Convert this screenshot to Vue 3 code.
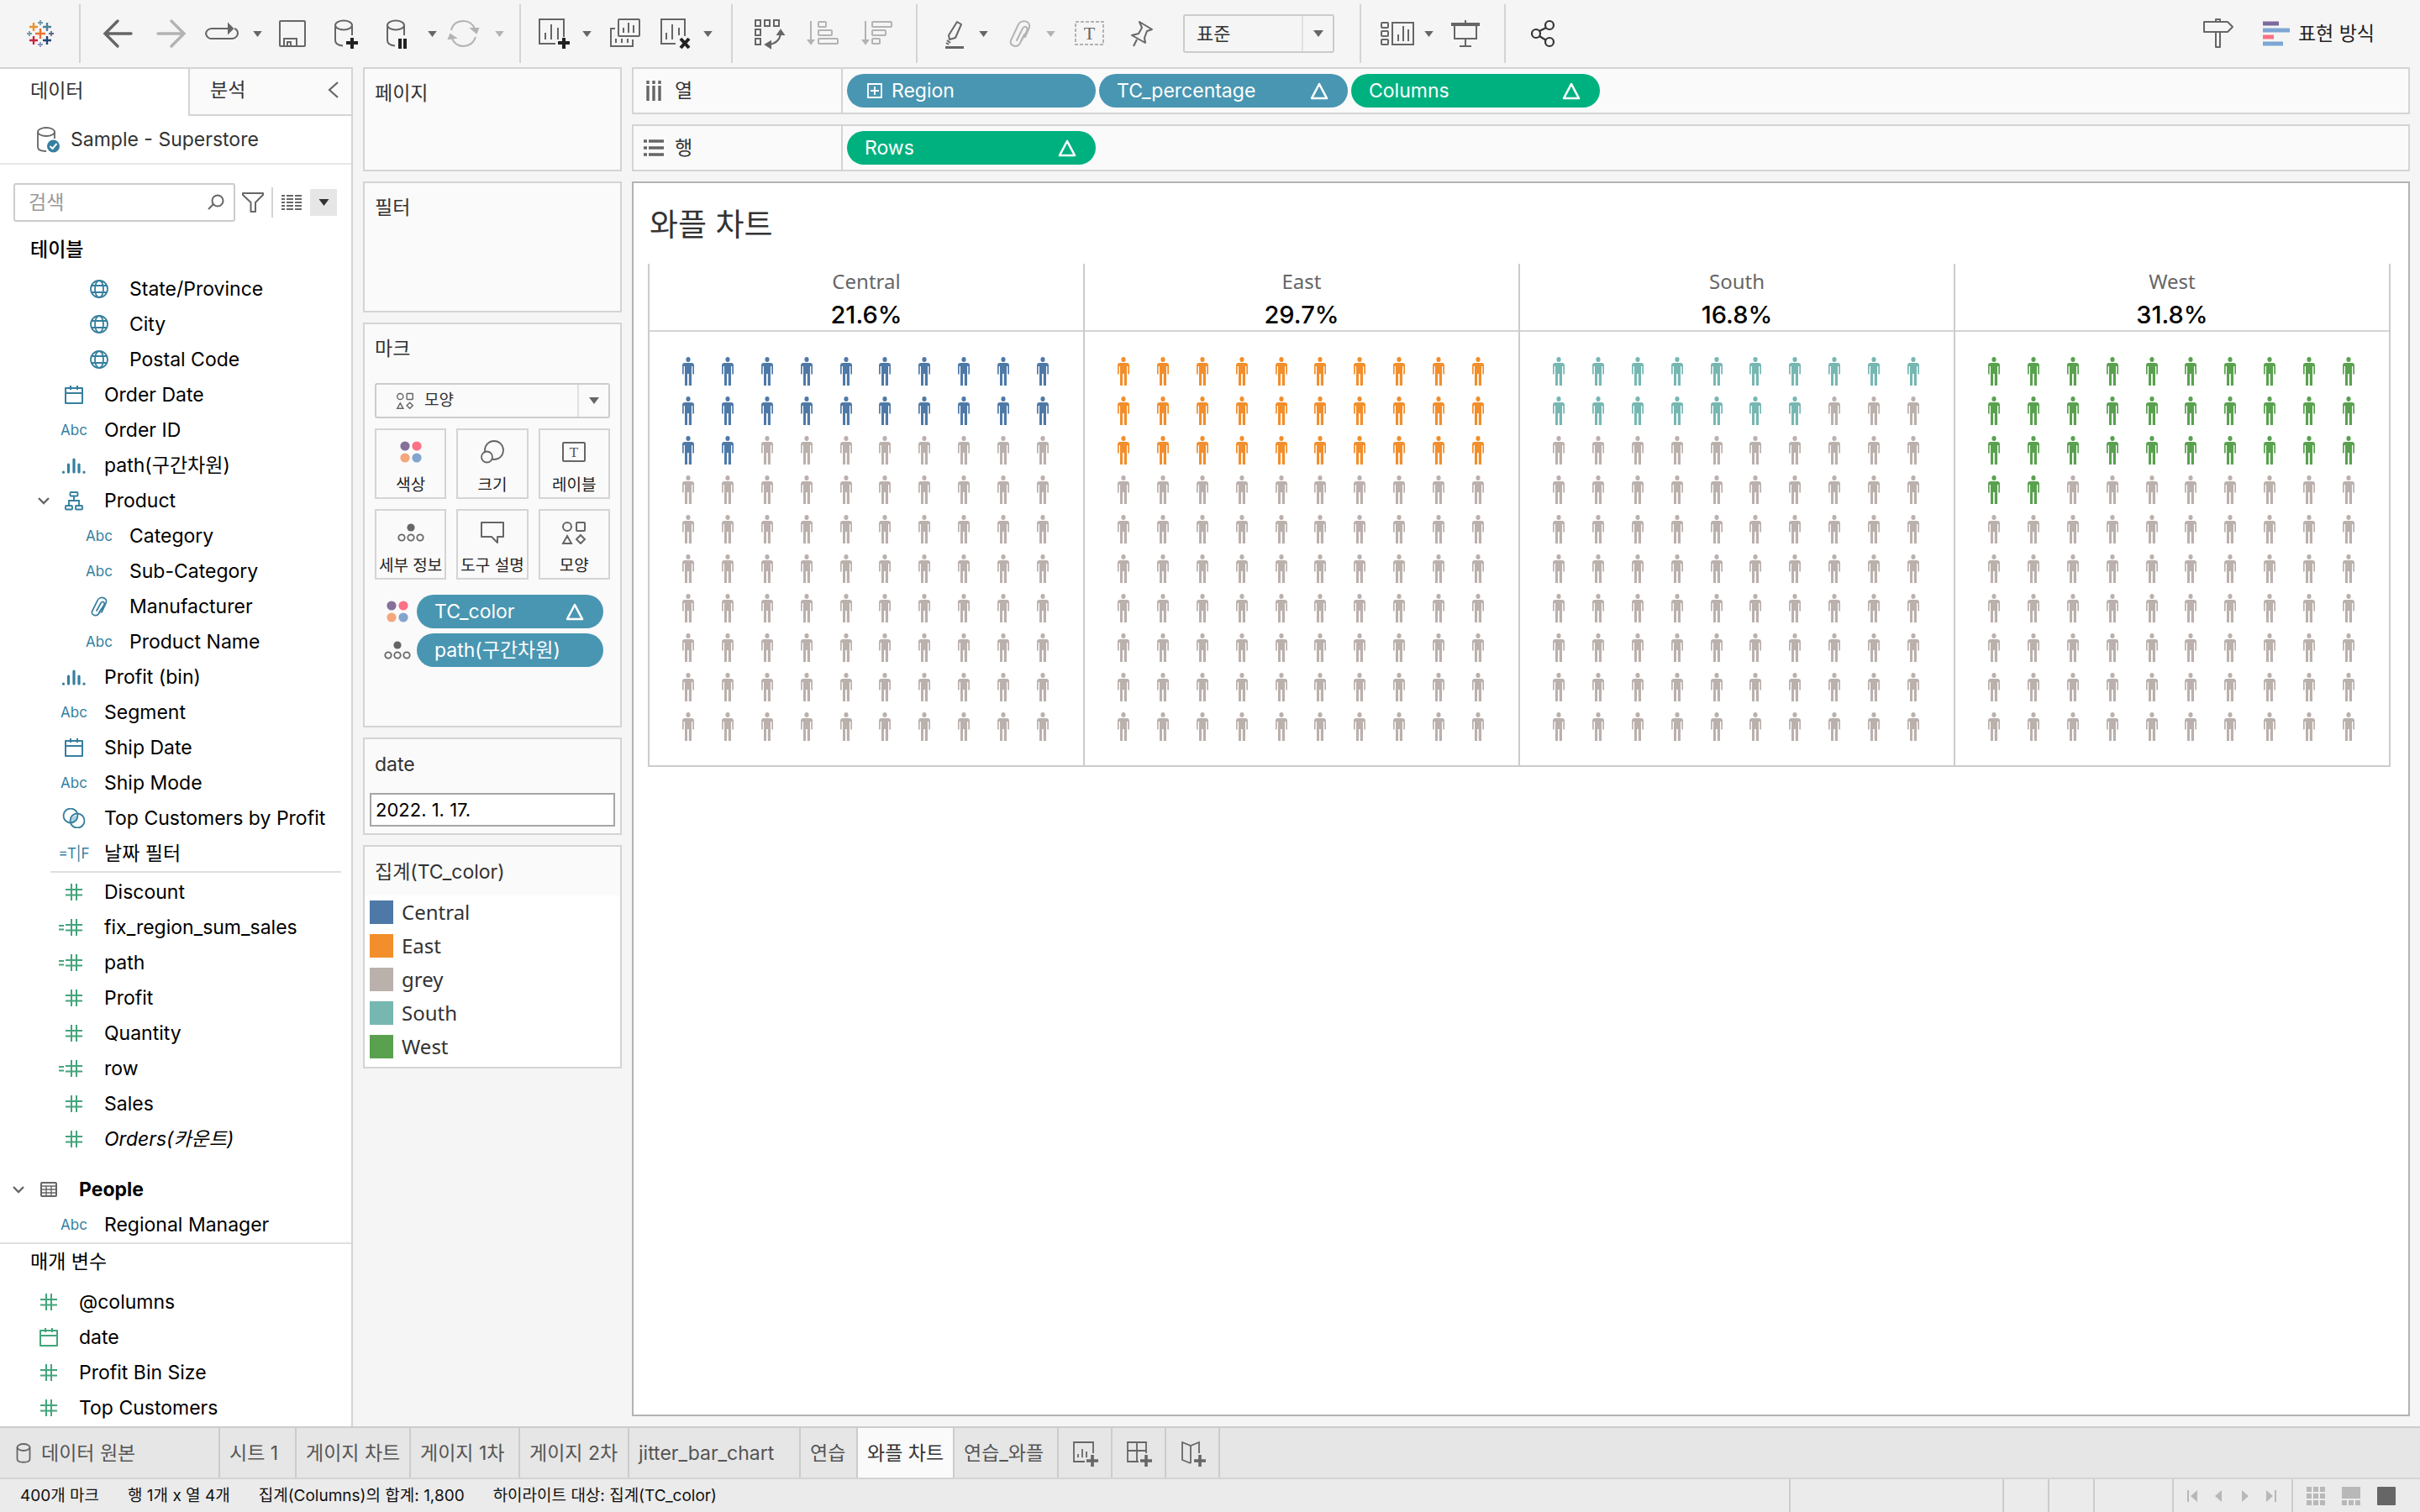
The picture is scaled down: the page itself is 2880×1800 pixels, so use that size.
<script setup>
import { ref } from 'vue'

const dimensions = [
  { name: 'State/Province', icon: 'globe', level: 2 },
  { name: 'City', icon: 'globe', level: 2 },
  { name: 'Postal Code', icon: 'globe', level: 2 },
  { name: 'Order Date', icon: 'calendar', level: 1 },
  { name: 'Order ID', text: 'Abc', level: 1 },
  { name: 'path(구간차원)', icon: 'bin', level: 1 },
  { name: 'Product', icon: 'hierarchy', level: 1, open: true },
  { name: 'Category', text: 'Abc', level: 2 },
  { name: 'Sub-Category', text: 'Abc', level: 2 },
  { name: 'Manufacturer', icon: 'clip-small', level: 2 },
  { name: 'Product Name', text: 'Abc', level: 2 },
  { name: 'Profit (bin)', icon: 'bin', level: 1 },
  { name: 'Segment', text: 'Abc', level: 1 },
  { name: 'Ship Date', icon: 'calendar', level: 1 },
  { name: 'Ship Mode', text: 'Abc', level: 1 },
  { name: 'Top Customers by Profit', icon: 'set', level: 1 },
  { name: '날짜 필터', text: '=T|F', level: 1 },
]
const measures = [
  { name: 'Discount', icon: 'hash', level: 1 },
  { name: 'fix_region_sum_sales', icon: 'calc-hash', level: 1 },
  { name: 'path', icon: 'calc-hash', level: 1 },
  { name: 'Profit', icon: 'hash', level: 1 },
  { name: 'Quantity', icon: 'hash', level: 1 },
  { name: 'row', icon: 'calc-hash', level: 1 },
  { name: 'Sales', icon: 'hash', level: 1 },
  { name: 'Orders(카운트)', icon: 'hash', level: 1, italic: true },
]
const people = [
  { name: 'People', icon: 'table', level: 0, open: true, bold: true },
  { name: 'Regional Manager', text: 'Abc', level: 1 },
]
const parameters = [
  { name: '@columns', icon: 'hash', level: 0 },
  { name: 'date', icon: 'calendar', level: 0 },
  { name: 'Profit Bin Size', icon: 'hash', level: 0 },
  { name: 'Top Customers', icon: 'hash', level: 0 },
]
const fieldGroups = [
  { id: 'dimensions', fields: dimensions },
  { id: 'measures', fields: measures },
  { id: 'people', fields: people },
]
const markButtons = [
  { label: '색상', icon: 'm-color' },
  { label: '크기', icon: 'm-size' },
  { label: '레이블', icon: 'm-label' },
  { label: '세부 정보', icon: 'm-detail' },
  { label: '도구 설명', icon: 'm-tooltip' },
  { label: '모양', icon: 'm-shape' },
]
const markPills = [
  { label: 'TC_color', icon: 'm-color', delta: true },
  { label: 'path(구간차원)', icon: 'm-detail', delta: false },
]
const shelves = [
  {
    label: '열', icon: 'columns',
    pills: [
      { label: 'Region', kind: 'dimension', expand: true },
      { label: 'TC_percentage', kind: 'dimension', delta: true },
      { label: 'Columns', kind: 'measure', delta: true },
    ],
  },
  { label: '행', icon: 'rows', pills: [{ label: 'Rows', kind: 'measure', delta: true }] },
]
const regions = [
  { name: 'Central', share: '21.6%', filled: 22 },
  { name: 'East', share: '29.7%', filled: 30 },
  { name: 'South', share: '16.8%', filled: 17 },
  { name: 'West', share: '31.8%', filled: 32 },
]
const legend = ['Central', 'East', 'grey', 'South', 'West']
const sheets = [
  { name: '시트 1', width: 91 },
  { name: '게이지 차트', width: 136 },
  { name: '게이지 1차', width: 130 },
  { name: '게이지 2차', width: 130 },
  { name: 'jitter_bar_chart', width: 204 },
  { name: '연습', width: 68 },
  { name: '와플 차트', width: 115 },
  { name: '연습_와플', width: 124 },
]
const activeSheet = ref('와플 차트')
const newSheetButtons = [
  { label: '새 워크시트', icon: 'add-sheet' },
  { label: '새 대시보드', icon: 'add-dashboard' },
  { label: '새 스토리', icon: 'add-story' },
]
const stats = ['400개 마크', '행 1개 x 열 4개', '집계(Columns)의 합계: 1,800', '하이라이트 대상: 집계(TC_color)']
const search = ref('')
const dateValue = ref('2022. 1. 17.')
const fit = ref('표준')
const markType = ref('모양')

const colorOf = (region, n) => (n <= region.filled ? region.name.toLowerCase() : 'grey')
</script>

<template>
  <div class="app">
    <svg class="defs" aria-hidden="true">
      <symbol id="caret" viewBox="0 0 12 8"><path d="M0 0H12L6 8Z" fill="currentColor" /></symbol>
      <symbol id="delta" viewBox="0 0 22 22"><path d="M11 3 20 20H2Z" fill="none" stroke="currentColor" stroke-width="2.6" stroke-linejoin="round" /></symbol>
      <symbol id="chevron" viewBox="0 0 16 16"><path d="M2 5 8 11 14 5" fill="none" stroke="#666" stroke-width="2.4" /></symbol>

      <g id="back" fill="none" stroke="currentColor" stroke-width="3.4" stroke-linecap="round"><path d="M20 5 5 20 20 35M5 20H36" /></g>
      <g id="forward" fill="none" stroke="currentColor" stroke-width="3.4" stroke-linecap="round"><path d="M20 5 35 20 20 35M35 20H4" /></g>
      <g id="replay" fill="none" stroke="currentColor" stroke-width="2"><path d="M25 14H5A7 7 0 0 0 -3 20 7 7 0 0 0 5 26H28A7 7 0 0 0 35 20C35 17 34 15 31 14" /><path d="M24 9 29 14 24 19Z" fill="currentColor" /></g>
      <g id="save" fill="none" stroke="currentColor" stroke-width="2"><rect x="5" y="5" width="30" height="30" rx="1" /><path d="M10 35V26H25V35M14 35V30H18V35" /></g>
      <g id="db-add" fill="none" stroke="currentColor" stroke-width="2"><ellipse cx="17" cy="10" rx="10" ry="5.5" /><path d="M7 10V28C7 32 11 34 16 34.500M27 10V22" /><path d="M27 25V38M20 31H34" stroke="#222" stroke-width="4" /></g>
      <g id="db-pause" fill="none" stroke="currentColor" stroke-width="2"><ellipse cx="15" cy="10" rx="10" ry="5.500" /><path d="M5 10V28C5 32 9 34 14 34.500M25 10V22" /><path d="M20 26V38M26 26V38" stroke="#222" stroke-width="4" /></g>
      <g id="refresh" fill="none" stroke="currentColor" stroke-width="2"><path d="M1 16C3 8 9 5 15.500 5 22 5 27 9 29.500 15M30 24C28 31 22 35 15.500 35 9 35 4 31 1.500 25" /><path d="M25 14H33L31 19ZM-2 26 0 21 6 25Z" fill="currentColor" /></g>
      <g id="sheet-add" fill="none" stroke="currentColor" stroke-width="2"><path d="M31 24V3H2V32H21M9 19V27M16 9V27M24 13V27" /><path d="M31 25V38M24 31H38" stroke="#222" stroke-width="4" /></g>
      <g id="sheet-copy" fill="none" stroke="currentColor" stroke-width="2"><rect x="16" y="3" width="25" height="20" rx="1" /><path d="M12 14H7V35H33V27M22 13V19M28 7V19M34 10V19M13 26V31M20 26V31M27 26V31" /></g>
      <g id="sheet-clear" fill="none" stroke="currentColor" stroke-width="2"><path d="M31 23V3H3V32H20M9 19V27M16 9V27M24 13V22" /><path d="M26 26 36 37M36 26 26 37" stroke="#222" stroke-width="4" /></g>
      <g id="swap" fill="none" stroke="currentColor" stroke-width="2"><rect x="3" y="4" width="6" height="7" /><rect x="14" y="4" width="6" height="7" /><rect x="25" y="4" width="6" height="7" /><rect x="3" y="15" width="6" height="7" /><rect x="3" y="26" width="6" height="7" /><path d="M33 20C32 27 27 32 19 33" /><path d="M33 16 29.500 21H36.500ZM15 33 21 29.500V37Z" fill="currentColor" /></g>
      <g id="sort-asc" fill="none" stroke="currentColor" stroke-width="2"><path d="M5 5V29" /><path d="M2 28H8L5 32Z" fill="currentColor" /><rect x="14" y="6" width="9" height="6" rx="1" /><rect x="14" y="16" width="16" height="6" rx="1" /><rect x="14" y="26" width="23" height="6" rx="1" /></g>
      <g id="sort-desc" fill="none" stroke="currentColor" stroke-width="2"><path d="M6 5V29" /><path d="M3 28H9L6 32Z" fill="currentColor" /><rect x="14" y="6" width="23" height="6" rx="1" /><rect x="14" y="16" width="16" height="6" rx="1" /><rect x="14" y="26" width="9" height="6" rx="1" /></g>
      <g id="highlighter" fill="none" stroke="currentColor" stroke-width="2"><path d="M27 6 32 9 25 25 18 27 17 22Z" stroke-linejoin="round" /><path d="M15 28 19 31M14 31 17 33" /><path d="M13 36.500H35" stroke-width="3" /></g>
      <g id="clip" fill="none" stroke="currentColor" stroke-width="2"><path d="M27 21 23 29M18 28 25 14C27 10 32 12 30 17L21 33C17 37 9 34 11 28L20 9C23 3 35 4 33 13L28 24" stroke-linecap="round" /></g>
      <g id="text-box" fill="none" stroke="currentColor" stroke-width="2"><rect x="8" y="6" width="33" height="27" stroke="#b3b3b3" stroke-dasharray="4 2" /><text x="24.500" y="27" text-anchor="middle" font-family="Liberation Serif, serif" font-size="22" fill="currentColor" stroke="none">T</text></g>
      <g id="pin" fill="none" stroke="currentColor" stroke-width="2"><path d="M20 6 35 15 29 17 26 25 27 31 11 22 19 20 23 13ZM17 27 13 35" stroke-linejoin="round" /></g>
      <g id="cards" fill="none" stroke="currentColor" stroke-width="2"><rect x="2" y="7" width="8" height="6" rx="1" /><rect x="2" y="17" width="8" height="6" rx="1" /><rect x="2" y="27" width="8" height="6" rx="1" /><rect x="15" y="7" width="25" height="26" /><path d="M22 21V29M28 11V29M34 15V29" /></g>
      <g id="present" fill="none" stroke="currentColor" stroke-width="2"><path d="M5 9H39" stroke-width="4" /><path d="M9 11V26H35V11M22 4V8M22 26V35M15 35H29" /></g>
      <g id="share" fill="none" stroke="#333" stroke-width="2.200"><circle cx="12" cy="20" r="5" /><circle cx="28" cy="10" r="5" /><circle cx="28" cy="30" r="5" /><path d="M16 17 24 13M16 23 24 28" /></g>
      <g id="signpost" fill="none" stroke="currentColor" stroke-width="2"><path d="M3 6H31L37 12 31 18H3ZM17 6V3H22V6M17 18V36H22V18" stroke-linejoin="round" /></g>

      <symbol id="globe" viewBox="0 0 40 24"><g fill="none" stroke="currentColor" stroke-width="1.800"><circle cx="20" cy="12" r="10" /><ellipse cx="20" cy="12" rx="5" ry="10" /><path d="M11 8H29M11 16H29" /></g></symbol>
      <symbol id="calendar" viewBox="0 0 40 24"><path d="M10 4H30V22H10ZM10 10H30M16 1V6M24 1V6" fill="none" stroke="currentColor" stroke-width="2" stroke-linejoin="round" /></symbol>
      <symbol id="bin" viewBox="0 0 40 24"><g fill="none" stroke="currentColor" stroke-width="3.200" stroke-linecap="round"><path d="M13.500 11V20M20 5V20M26 11V20M7.500 20V20.200M32 20V20.200" /></g></symbol>
      <symbol id="hierarchy" viewBox="0 0 40 24"><g fill="none" stroke="currentColor" stroke-width="1.900"><rect x="15.500" y="2" width="9" height="4.500" rx="1" /><rect x="10" y="18" width="8" height="4.500" rx="1" /><rect x="22" y="18" width="8" height="4.500" rx="1" /><path d="M20 6.500V12M14 18V12H26V18" /></g></symbol>
      <symbol id="clip-small" viewBox="0 0 40 24"><path d="M24 13 20 19M17 17 22 8C24 5 27 7 26 10L20 20C17 25 9 22 12 17L18 5C20 -1 31 1 28 8L23 19" fill="none" stroke="currentColor" stroke-width="1.700" stroke-linecap="round" /></symbol>
      <symbol id="set" viewBox="0 0 40 24"><path d="M15.500 15A8.500 8.500 0 0 1 24.500 9 8.500 8.500 0 0 1 15.500 17.500Z" fill="#4996b2" opacity=".45" /><g fill="none" stroke="currentColor" stroke-width="1.800"><circle cx="16" cy="9" r="8.500" /><circle cx="24" cy="15" r="8.500" /></g></symbol>
      <symbol id="hash" viewBox="0 0 40 24"><path d="M10 9H30M10 15.500H30M17 2V22M23 2V22" fill="none" stroke="currentColor" stroke-width="2" /></symbol>
      <symbol id="calc-hash" viewBox="0 0 40 24"><path d="M10 9H30M10 15.500H30M17 2V22M23 2V22M2 10H8M2 14.500H8" fill="none" stroke="currentColor" stroke-width="2" /></symbol>
      <symbol id="table" viewBox="0 0 40 24"><g fill="none" stroke="#666"><rect x="11" y="4" width="18" height="16" rx="1" stroke-width="2" /><path d="M11 8H29M11 12H29M11 16H29M17 8V20M23 8V20" stroke-width="1.400" /></g></symbol>

      <symbol id="m-color" viewBox="0 0 32 28"><circle cx="9" cy="7" r="5.600" fill="#86719b" /><circle cx="23" cy="7" r="5.600" fill="#fb7185" /><circle cx="9" cy="21" r="5.600" fill="#f4a77c" /><circle cx="23" cy="21" r="5.600" fill="#82a5cd" /></symbol>
      <symbol id="m-size" viewBox="0 0 32 28"><g fill="#fafafa" stroke="#666" stroke-width="1.800"><circle cx="18" cy="12" r="11" /><circle cx="9.500" cy="20" r="6.500" /></g></symbol>
      <symbol id="m-label" viewBox="0 0 32 28"><rect x="3" y="3" width="26" height="22" rx="1" fill="none" stroke="#666" stroke-width="2" /><text x="16" y="20" text-anchor="middle" font-family="Liberation Serif, serif" font-size="17" fill="#555">T</text></symbol>
      <symbol id="m-detail" viewBox="0 0 32 28"><circle cx="16" cy="8" r="4.600" fill="#666" /><g fill="none" stroke="#666" stroke-width="1.800"><circle cx="5" cy="20" r="3.700" /><circle cx="16" cy="20" r="3.700" /><circle cx="27" cy="20" r="3.700" /></g></symbol>
      <symbol id="m-tooltip" viewBox="0 0 32 28"><path d="M3 2H29V19H22V26L15 19H3Z" fill="none" stroke="#666" stroke-width="2" stroke-linejoin="round" /></symbol>
      <symbol id="m-shape" viewBox="0 0 32 28"><g fill="none" stroke="#666" stroke-width="2"><circle cx="8" cy="7" r="5" /><rect x="19" y="2" width="10" height="10" rx="1" /><path d="M8 18 13 27H3ZM24 17 29 22 24 27 19 22Z" /></g></symbol>

      <symbol id="columns" viewBox="0 0 24 24"><path d="M5 0V4M12 0V4M19 0V4M5 6V24M12 6V24M19 6V24" stroke="#666" stroke-width="3.400" /></symbol>
      <symbol id="rows" viewBox="0 0 24 24"><path d="M0 4H4M0 12H4M0 20H4M6 4H24M6 12H24M6 20H24" stroke="#666" stroke-width="3.600" /></symbol>
      <symbol id="expand" viewBox="0 0 18 18"><path d="M1 1H17V17H1ZM4 9H14M9 4V14" fill="none" stroke="currentColor" stroke-width="1.800" /></symbol>

      <symbol id="person" viewBox="0 0 14 34"><ellipse cx="7" cy="3" rx="2.600" ry="3" fill="currentColor" /><path d="M3 7H11A3 3 0 0 1 14 10V20.500H12.300V11H11V34H7.800V20H6V34H3V11H1.700V20.500H0V10A3 3 0 0 1 3 7Z" fill="currentColor" /></symbol>

      <symbol id="add-sheet" viewBox="0 0 32 32"><path d="M25 16V3H2V26H15M7 17V21M12 11V21M17 14V21" fill="none" stroke="#666" stroke-width="1.800" /><path d="M24 18V32M17 25H31" stroke="#666" stroke-width="3.600" /></symbol>
      <symbol id="add-dashboard" viewBox="0 0 32 32"><path d="M24 16V3H2V26H15M2 13H24M13 3V26" fill="none" stroke="#666" stroke-width="1.800" /><path d="M24 18V32M17 25H31" stroke="#666" stroke-width="3.600" /></symbol>
      <symbol id="add-story" viewBox="0 0 32 32"><path d="M23 16V3L13 7 3 3V24L13 28M13 7V28" fill="none" stroke="#666" stroke-width="1.800" /><path d="M24 18V32M17 25H31" stroke="#666" stroke-width="3.600" /></symbol>
    </svg>

    <header class="toolbar">
      <div class="group brand">
        <svg width="32" height="32" viewBox="0 0 32 32" fill="none" stroke-width="2.400" role="img" aria-label="Tableau">
          <path d="M16 10V22M10 16H22" stroke="#eb7331" />
          <path d="M8 3V13M3 8H13" stroke="#e8932e" /><path d="M24 3V13M19 8H29" stroke="#4f8096" />
          <path d="M8 19V29M3 24H13" stroke="#c8263f" /><path d="M24 19V29M19 24H29" stroke="#26457c" />
          <g stroke-width="1.800"><path d="M16 0V6M13 3H19" stroke="#7199a6" /><path d="M16 26V32M13 29H19" stroke="#8a93b8" /><path d="M3 13V19M0 16H6" stroke="#7199a6" /><path d="M29 13V19M26 16H32" stroke="#5c6692" /></g>
        </svg>
      </div>
      <div class="group g-nav">
        <button class="tool" aria-label="뒤로"><svg viewBox="0 0 40 40"><use href="#back" /></svg></button>
        <button class="tool dim" aria-label="앞으로"><svg viewBox="0 0 40 40"><use href="#forward" /></svg></button>
        <div class="split">
          <button class="tool" aria-label="다시 실행"><svg viewBox="0 0 40 40"><use href="#replay" /></svg></button>
          <button class="drop" aria-label="다시 실행 메뉴"><svg><use href="#caret" /></svg></button>
        </div>
        <button class="tool" aria-label="저장"><svg viewBox="0 0 40 40"><use href="#save" /></svg></button>
        <button class="tool" aria-label="새 데이터 원본"><svg viewBox="0 0 40 40"><use href="#db-add" /></svg></button>
        <div class="split">
          <button class="tool" aria-label="자동 업데이트 일시 중지"><svg viewBox="0 0 40 40"><use href="#db-pause" /></svg></button>
          <button class="drop" aria-label="업데이트 메뉴"><svg><use href="#caret" /></svg></button>
        </div>
        <div class="split dim">
          <button class="tool" aria-label="새로 고침"><svg viewBox="0 0 40 40"><use href="#refresh" /></svg></button>
          <button class="drop" aria-label="새로 고침 메뉴"><svg><use href="#caret" /></svg></button>
        </div>
      </div>
      <div class="group g-sheet">
        <div class="split">
          <button class="tool" aria-label="새 워크시트"><svg viewBox="0 0 40 40"><use href="#sheet-add" /></svg></button>
          <button class="drop" aria-label="새 워크시트 메뉴"><svg><use href="#caret" /></svg></button>
        </div>
        <button class="tool" aria-label="복제"><svg viewBox="0 0 40 40"><use href="#sheet-copy" /></svg></button>
        <div class="split">
          <button class="tool" aria-label="시트 지우기"><svg viewBox="0 0 40 40"><use href="#sheet-clear" /></svg></button>
          <button class="drop" aria-label="지우기 메뉴"><svg><use href="#caret" /></svg></button>
        </div>
      </div>
      <div class="group g-sort">
        <button class="tool" aria-label="행과 열 바꾸기"><svg viewBox="0 0 40 40"><use href="#swap" /></svg></button>
        <button class="tool dim" aria-label="오름차순 정렬"><svg viewBox="0 0 40 40"><use href="#sort-asc" /></svg></button>
        <button class="tool dim" aria-label="내림차순 정렬"><svg viewBox="0 0 40 40"><use href="#sort-desc" /></svg></button>
      </div>
      <div class="group g-format">
        <div class="split">
          <button class="tool" aria-label="하이라이트"><svg viewBox="0 0 40 40"><use href="#highlighter" /></svg></button>
          <button class="drop" aria-label="하이라이트 메뉴"><svg><use href="#caret" /></svg></button>
        </div>
        <div class="split dim">
          <button class="tool" aria-label="멤버 그룹화"><svg viewBox="0 0 40 40"><use href="#clip" /></svg></button>
          <button class="drop" aria-label="그룹 메뉴"><svg><use href="#caret" /></svg></button>
        </div>
        <button class="tool" aria-label="마크 레이블 표시"><svg viewBox="0 0 40 40"><use href="#text-box" /></svg></button>
        <button class="tool" aria-label="축 고정"><svg viewBox="0 0 40 40"><use href="#pin" /></svg></button>
        <div class="select-box fit">
          <select v-model="fit" aria-label="맞춤"><option>표준</option></select>
          <span class="select-caret"><svg><use href="#caret" /></svg></span>
        </div>
      </div>
      <div class="group g-view">
        <div class="split">
          <button class="tool" aria-label="카드 표시"><svg viewBox="0 0 40 40"><use href="#cards" /></svg></button>
          <button class="drop" aria-label="카드 메뉴"><svg><use href="#caret" /></svg></button>
        </div>
        <button class="tool" aria-label="프레젠테이션 모드"><svg viewBox="0 0 40 40"><use href="#present" /></svg></button>
      </div>
      <div class="group g-share">
        <button class="tool" aria-label="공유"><svg viewBox="0 0 40 40"><use href="#share" /></svg></button>
      </div>
      <button class="tool guide" aria-label="가이드"><svg viewBox="0 0 40 40"><use href="#signpost" /></svg></button>
      <button class="show-me">
        <svg width="34" height="34" viewBox="0 0 34 34" fill="none" stroke-width="5"><path d="M1 5H20" stroke="#7b6a9e" /><path d="M1 13H33" stroke="#7ea6d3" /><path d="M1 21H14" stroke="#fb7185" /><path d="M1 29H25" stroke="#7ea6d3" /></svg>
        표현 방식
      </button>
    </header>

    <main class="workspace">
      <aside class="data-pane">
        <nav class="pane-tabs">
          <button class="pane-tab active">데이터</button>
          <button class="pane-tab">분석
            <svg width="14" height="20" viewBox="0 0 14 20"><path d="M12 1 2 10 12 19" fill="none" stroke="#666" stroke-width="2.200" /></svg>
          </button>
        </nav>
        <button class="source">
          <svg width="28" height="32" viewBox="0 0 28 32"><g fill="none" stroke="#666" stroke-width="1.800"><ellipse cx="11" cy="7" rx="10" ry="5" /><path d="M1 7V25C1 28 5 30 11 30M21 7V15" /></g><circle cx="19.500" cy="24" r="7.500" fill="#357f9f" /><path d="M15.500 24 18.500 27 23.500 21" fill="none" stroke="#fff" stroke-width="2" /></svg>
          Sample - Superstore
        </button>
        <div class="search-row">
          <label class="search-box">
            <input v-model="search" type="text" placeholder="검색" aria-label="검색" />
            <svg width="20" height="20" viewBox="0 0 20 20"><g fill="none" stroke="#666" stroke-width="2"><circle cx="12" cy="8" r="6.500" /><path d="M7 12 1 18" /></g></svg>
          </label>
          <button class="bare" aria-label="필터"><svg width="26" height="26" viewBox="0 0 26 26"><path d="M1 2H25V4L16 13V24H10.500V13L1 4Z" fill="none" stroke="#666" stroke-width="2" stroke-linejoin="round" /></svg></button>
          <span class="rule"></span>
          <button class="bare" aria-label="목록 보기"><svg width="24" height="20" viewBox="0 0 24 20"><path d="M0 2H4M0 6H4M0 10H4M0 14H4M0 18H4M6 2H14M6 6H14M6 10H14M6 14H14M6 18H14M16 2H24M16 6H24M16 10H24M16 14H24M16 18H24" stroke="#666" stroke-width="1.800" /></svg></button>
          <button class="bare menu" aria-label="메뉴"><svg width="15" height="8"><use href="#caret" /></svg></button>
        </div>
        <h2>테이블</h2>
        <ul v-for="group in fieldGroups" :key="group.id" class="fields" :class="group.id">
          <li v-for="f in group.fields" :key="f.name" :class="['level-' + f.level, { bold: f.bold, italic: f.italic }]">
            <span class="chev"><svg v-if="f.open" width="16" height="16"><use href="#chevron" /></svg></span>
            <span class="type"><template v-if="f.text">{{ f.text }}</template><svg v-else width="40" height="24"><use :href="'#' + f.icon" /></svg></span>
            <span class="name">{{ f.name }}</span>
          </li>
        </ul>
        <section class="params">
          <h2>매개 변수</h2>
          <ul class="fields measures">
            <li v-for="f in parameters" :key="f.name" class="level-0">
              <span class="chev"></span>
              <span class="type"><svg width="40" height="24"><use :href="'#' + f.icon" /></svg></span>
              <span class="name">{{ f.name }}</span>
            </li>
          </ul>
        </section>
      </aside>

      <div class="cards">
        <section class="card pages"><h3>페이지</h3></section>
        <section class="card filters"><h3>필터</h3></section>
        <section class="card marks">
          <h3>마크</h3>
          <div class="select-box mark-type">
            <svg width="24" height="20"><use href="#m-shape" /></svg>
            <select v-model="markType" aria-label="마크 유형"><option>모양</option></select>
            <span class="select-caret"><svg><use href="#caret" /></svg></span>
          </div>
          <div class="mark-grid">
            <button v-for="m in markButtons" :key="m.label">
              <svg width="32" height="28"><use :href="'#' + m.icon" /></svg>
              <span>{{ m.label }}</span>
            </button>
          </div>
          <div v-for="p in markPills" :key="p.label" class="mark-row">
            <svg width="32" height="28"><use :href="'#' + p.icon" /></svg>
            <button class="pill dimension">{{ p.label }}<svg v-if="p.delta" width="22" height="22"><use href="#delta" /></svg></button>
          </div>
        </section>
        <section class="card date">
          <label for="date-param">date</label>
          <input id="date-param" v-model="dateValue" type="text" />
        </section>
        <section class="card legend">
          <h3>집계(TC_color)</h3>
          <ul>
            <li v-for="item in legend" :key="item"><span class="swatch" :class="item.toLowerCase()"></span>{{ item }}</li>
          </ul>
        </section>
      </div>

      <div class="view">
        <div v-for="s in shelves" :key="s.label" class="shelf">
          <div class="shelf-label"><svg width="24" height="24"><use :href="'#' + s.icon" /></svg>{{ s.label }}</div>
          <div class="shelf-pills">
            <button v-for="p in s.pills" :key="p.label" class="pill" :class="p.kind">
              <svg v-if="p.expand" class="expand" width="18" height="18"><use href="#expand" /></svg>
              <span>{{ p.label }}</span>
              <svg v-if="p.delta" width="22" height="22"><use href="#delta" /></svg>
            </button>
          </div>
        </div>
        <section class="canvas">
          <h1>와플 차트</h1>
          <div class="waffles">
            <div v-for="r in regions" :key="r.name" class="region">
              <div class="region-head">
                <span class="region-name">{{ r.name }}</span>
                <strong>{{ r.share }}</strong>
              </div>
              <div class="people-grid">
                <svg v-for="n in 100" :key="n" width="14" height="34" :class="colorOf(r, n)"><use href="#person" /></svg>
              </div>
            </div>
          </div>
        </section>
      </div>
    </main>

    <nav class="sheet-bar">
      <button class="sheet origin">
        <svg width="18" height="24" viewBox="0 0 18 24"><g fill="none" stroke="#666" stroke-width="1.800"><ellipse cx="9" cy="5" rx="7.500" ry="4" /><path d="M1.500 5V19C1.500 24 16.500 24 16.500 19V5" /></g></svg>
        데이터 원본
      </button>
      <button v-for="s in sheets" :key="s.name" class="sheet" :class="{ active: s.name === activeSheet }" :style="{ width: s.width + 'px' }" @click="activeSheet = s.name">{{ s.name }}</button>
      <button v-for="b in newSheetButtons" :key="b.icon" class="sheet add" :aria-label="b.label"><svg width="32" height="32"><use :href="'#' + b.icon" /></svg></button>
    </nav>

    <footer class="status">
      <span v-for="s in stats" :key="s" class="stat">{{ s }}</span>
      <span class="cell long"></span><span class="cell short"></span><span class="cell short"></span><span class="cell mid"></span>
      <div class="cell pager">
        <button aria-label="처음"><svg width="14" height="14" viewBox="0 0 14 14"><path d="M1 0H3V14H1ZM13 0V14L5 7Z" /></svg></button>
        <button aria-label="이전"><svg width="14" height="14" viewBox="0 0 14 14"><path d="M11 0V14L3 7Z" /></svg></button>
        <button aria-label="다음"><svg width="14" height="14" viewBox="0 0 14 14"><path d="M3 0V14L11 7Z" /></svg></button>
        <button aria-label="마지막"><svg width="14" height="14" viewBox="0 0 14 14"><path d="M11 0H13V14H11ZM1 0V14L9 7Z" /></svg></button>
      </div>
      <div class="cell views">
        <button aria-label="격자 보기"><svg width="22" height="22" viewBox="0 0 22 22"><path d="M0 0H6V6H0ZM8 0H14V6H8ZM16 0H22V6H16ZM0 8H6V14H0ZM8 8H14V14H8ZM16 8H22V14H16ZM0 16H6V22H0ZM8 16H14V22H8ZM16 16H22V22H16Z" /></svg></button>
        <button aria-label="필름스트립 보기"><svg width="22" height="22" viewBox="0 0 22 22"><path d="M0 0H22V14H0ZM0 16H6V22H0ZM8 16H14V22H8ZM16 16H22V22H16Z" /></svg></button>
        <button class="on" aria-label="탭 보기"><svg width="22" height="22" viewBox="0 0 22 22"><rect width="22" height="22" rx="1" /></svg></button>
      </div>
    </footer>
  </div>
</template>

<style>
body {
  margin: 0;
  background: #f5f5f5;
}
</style>

<style scoped>
.app {
  display: flex;
  flex-direction: column;
  min-height: 100vh;
  background: #f5f5f5;
  color: #333;
  font: 23px/32px Inter, "Noto Sans CJK KR", sans-serif;
}
.app *, .app *::before { box-sizing: border-box; }
.defs { position: absolute; width: 0; height: 0; }
svg { display: block; flex: none; overflow: visible; }
button, input, select { margin: 0; padding: 0; border: 0; border-radius: 0; background: none; color: inherit; font: inherit; }
ul { margin: 0; padding: 0; list-style: none; }
h1, h2, h3 { margin: 0; font: inherit; }

/* Toolbar */
.toolbar { display: flex; align-items: center; height: 80px; color: #666; }
.group { display: flex; align-items: center; height: 70px; border-right: 2px solid #d4d4d4; }
.brand { padding: 0 30px 0 32px; }
.g-nav { padding: 0 2px 0 24px; }
.g-sheet { padding: 0 6px 0 20px; }
.g-sort { padding: 0 2px 0 24px; }
.g-format { padding: 0 30px 0 20px; }
.g-view { padding: 0 4px 0 22px; }
.g-share { padding-left: 24px; border-right: 0; }
.tool { width: 40px; height: 40px; margin-right: 24px; flex: none; }
.tool svg { width: 40px; height: 40px; }
.split { display: flex; align-items: center; }
.split .tool { margin-right: 0; }
.drop { display: grid; place-items: center; width: 40px; height: 40px; padding-right: 4px; }
.drop svg { width: 11px; height: 7px; }
.dim { color: #b3b3b3; }
.guide { margin: 0 32px 0 auto; }
.show-me { display: flex; align-items: center; gap: 9px; margin-right: 54px; color: #222; }

.select-box { display: flex; align-items: center; border: 2px solid #ccc; border-radius: 3px; background: #fafafa; color: #333; }
.select-box select { flex: 1; min-width: 0; align-self: stretch; appearance: none; }
.select-caret { display: grid; place-items: center; align-self: stretch; width: 37px; border-left: 2px solid #e0e0e0; color: #666; pointer-events: none; }
.select-caret svg { width: 14px; height: 8px; }
.fit { width: 180px; height: 46px; margin-left: 8px; background: #f5f5f5; }
.fit select { padding-left: 14px; font-size: 22px; }

/* Workspace */
.workspace { display: flex; flex: 1; }

.data-pane { width: 420px; flex: none; border-top: 2px solid #d4d4d4; border-right: 2px solid #d4d4d4; background: #fff; color: #000; }
.pane-tabs { display: flex; height: 56px; color: #333; }
.pane-tab { display: flex; align-items: center; justify-content: space-between; text-align: left; }
.pane-tab.active { width: 224px; padding: 0 36px 4px; }
.pane-tab:not(.active) { flex: 1; padding: 0 14px 4px 24px; border-bottom: 2px solid #d4d4d4; border-left: 2px solid #d4d4d4; background: #fafafa; }
.source { display: flex; align-items: center; gap: 12px; width: 100%; height: 58px; padding-left: 44px; border-bottom: 2px solid #e6e6e6; color: #333; }
.search-row { display: flex; align-items: center; height: 46px; margin: 22px 16px 12px; }
.search-box { display: flex; align-items: center; width: 264px; height: 46px; padding-right: 11px; border: 2px solid #ccc; border-radius: 3px; }
.search-box input { flex: 1; min-width: 0; padding-left: 16px; outline: 0; }
.search-box input::placeholder { color: #999; opacity: 1; }
.bare { display: grid; place-items: center; margin-left: 8px; }
.rule { width: 2px; height: 36px; margin: 0 2px 0 9px; background: #d4d4d4; }
.menu { width: 32px; height: 32px; margin-left: 10px; background: #e6e6e6; color: #333; }
h2 { margin-bottom: 5px; padding-left: 36px; font-weight: 500; line-height: 42px; }
.fields li { display: flex; align-items: center; height: 42px; }
.level-0 { padding-left: 14px; }
.level-1 { padding-left: 44px; }
.level-2 { padding-left: 74px; }
.chev { width: 16px; margin-right: 8px; flex: none; }
.type { display: flex; justify-content: center; width: 40px; margin-right: 16px; flex: none; color: #357f9f; font-size: 17px; white-space: nowrap; }
.name { white-space: nowrap; }
.dimensions { position: relative; margin-bottom: 2px; padding-bottom: 2px; }
.dimensions::before { content: ""; position: absolute; right: 12px; bottom: 0; left: 60px; height: 2px; background: #dedede; }
.measures .type { color: #43a47b; }
.people { margin-top: 18px; }
.bold { font-weight: 700; }
.italic { font-style: italic; }
.params { border-top: 2px solid #e0e0e0; }
.params h2 { margin-bottom: 6px; font-weight: 400; }

.cards { display: flex; flex-direction: column; gap: 12px; width: 308px; margin: 0 12px; flex: none; }
.card { border: 2px solid #d4d4d4; background: #fafafa; }
.card h3 { padding: 13px 12px; line-height: 32px; }
.pages { min-height: 124px; }
.filters { min-height: 156px; }
.marks { min-height: 482px; }
.mark-type { height: 42px; margin: 12px 12px 12px; padding-left: 22px; font-size: 19px; }
.mark-type select { padding-left: 11px; }
.mark-grid { display: grid; grid-template-columns: repeat(3, 1fr); gap: 12px; margin: 0 12px 18px; color: #222; font-size: 19px; line-height: 28px; }
.mark-grid button { display: flex; flex-direction: column; align-items: center; gap: 12px; height: 84px; padding-top: 12px; border: 2px solid #d4d4d4; white-space: nowrap; }
.mark-row { display: flex; align-items: center; gap: 7px; margin: 0 20px 6px 23px; }
.pill { display: flex; align-items: center; height: 40px; padding: 0 23px 0 21px; border-radius: 20px; color: #fff; }
.pill svg:last-child { margin-left: auto; }
.mark-row .pill { flex: 1; }
.pill.dimension { background: #4996b2; }
.pill.measure { background: #00b180; }
.date { padding: 14px 6px 8px; }
.date label { display: block; padding: 0 6px; line-height: 32px; }
.date input { display: block; width: 100%; height: 40px; margin-top: 18px; padding: 0 5px; border: 2px solid #a6a6a6; background: #fff; color: #000; font-size: 22px; }
.legend h3 { padding: 14px 12px 12px; }
.legend ul { padding: 6px 6px 10px; background: #fff; font: 24px/32px "Noto Sans", "Noto Sans CJK KR", sans-serif; }
.legend li { display: flex; align-items: center; gap: 10px; height: 28px; }
.legend li + li { margin-top: 12px; }
.swatch { width: 28px; height: 28px; background: currentColor; }
.central { color: #4e79a7; }
.east { color: #f28e2b; }
.grey { color: #bab0ac; }
.south { color: #76b7b2; }
.west { color: #59a14f; }
.legend li { color: #333; }

.view { display: flex; flex: 1; flex-direction: column; gap: 12px; min-width: 0; padding: 0 12px 12px 0; }
.shelf { display: flex; height: 56px; border: 2px solid #d4d4d4; background: #fafafa; }
.shelf-label { display: flex; align-items: center; gap: 13px; width: 249px; padding-left: 12px; border-right: 2px solid #d4d4d4; }
.shelf-pills { display: flex; align-items: center; gap: 4px; padding-left: 5px; }
.shelf .pill { width: 296px; }
.expand { margin: 0 11px 0 3px; }
.canvas { flex: 1; padding: 28px 21px 28px 17px; border: 2px solid #b3b3b3; background: #fff; }
.canvas h1 { margin: 0 2px 24px; font-size: 37px; line-height: 44px; }
.waffles { display: flex; border-left: 2px solid #ccc; font-family: "Noto Sans", "Noto Sans CJK KR", sans-serif; }
.region { flex: 1; border-right: 2px solid #ccc; border-bottom: 2px solid #ccc; }
.region-head { display: flex; flex-direction: column; align-items: center; height: 81px; padding-top: 5px; border-bottom: 2px solid #d4d4d4; }
.region-name { color: #666; font-size: 24px; line-height: 32px; }
.region-head strong { color: #000; font-family: Inter, sans-serif; font-size: 29px; font-weight: 500; line-height: 48px; }
.people-grid { display: grid; grid-template-columns: repeat(10, 1fr); grid-auto-rows: 47px; place-items: center; padding: 23px 25px 23px 23px; }

/* Sheet tabs and status bar */
.sheet-bar { display: flex; height: 61px; border-top: 2px solid #ccc; background: #e6e6e6; color: #555; }
.sheet { display: flex; align-items: center; flex: none; padding-left: 11px; border-right: 2px solid #ccc; white-space: nowrap; }
.origin { gap: 12px; width: 262px; padding-left: 19px; }
.sheet.active { background: #fafafa; color: #333; }
.add { width: 64px; padding-left: 16px; }
.status { display: flex; align-items: center; height: 41px; border-top: 2px solid #d4d4d4; background: #ebebeb; color: #111; font-size: 19px; line-height: 36px; }
.stat { margin-left: 34px; white-space: nowrap; }
.stat:first-child { margin-left: 24px; }
.cell { align-self: stretch; border-left: 2px solid #ccc; }
.long { width: 254px; margin-left: auto; }
.short { width: 54px; }
.mid { width: 94px; }
.pager { display: flex; align-items: center; justify-content: space-between; width: 142px; padding: 0 17px 0 15px; fill: #b8b8b8; }
.views { display: flex; align-items: center; gap: 20px; width: 153px; padding-left: 16px; fill: #b8b8b8; }
.views .on { fill: #666; }
</style>
